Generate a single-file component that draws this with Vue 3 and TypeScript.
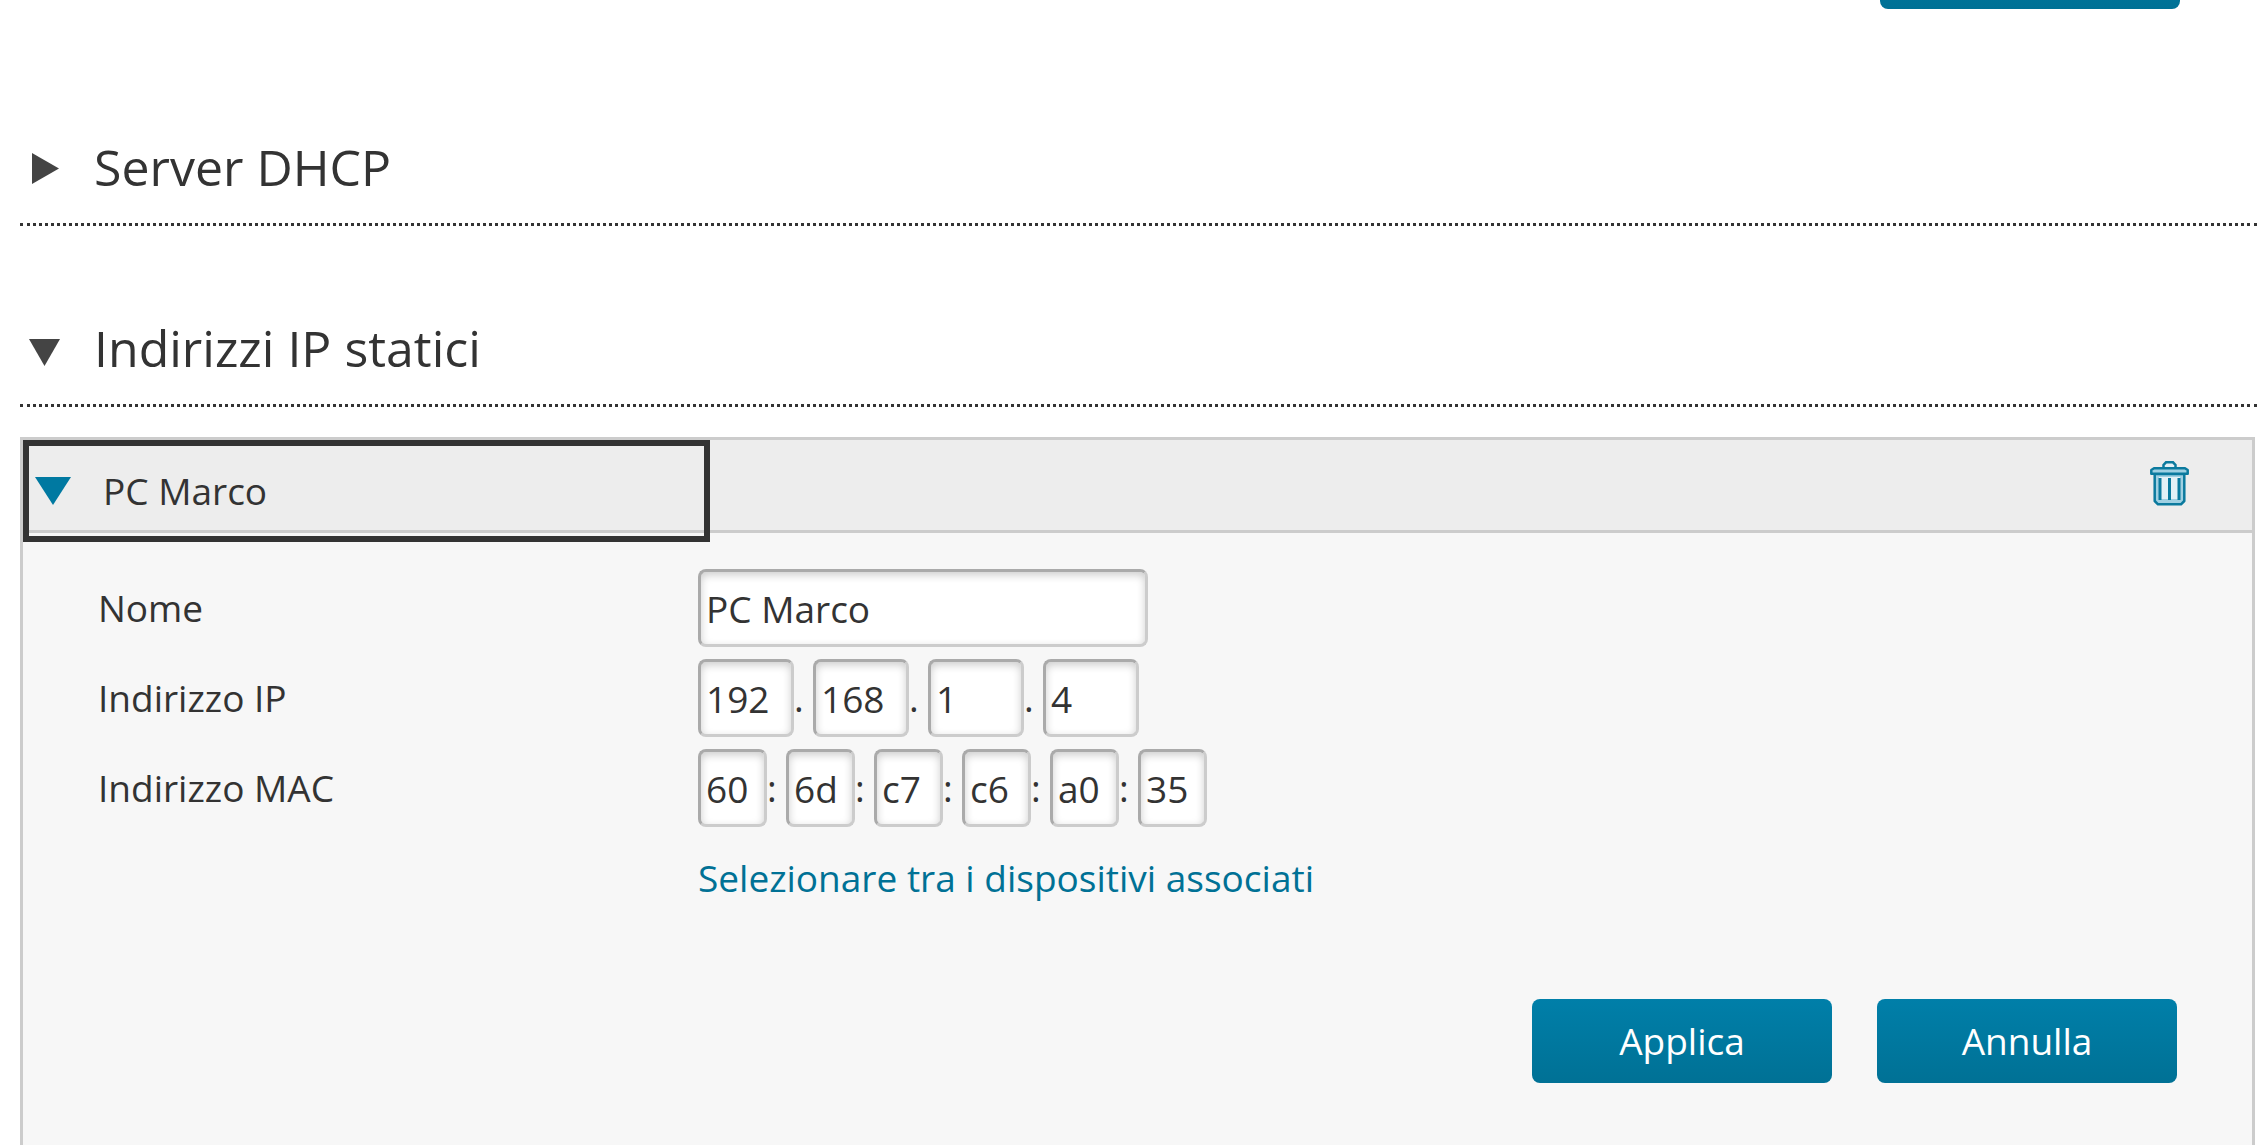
<script setup lang="ts">
import { reactive, ref } from 'vue'

const dhcpOpen = ref(false)
const staticOpen = ref(true)
const entryOpen = ref(true)

const entry = reactive({
  name: 'PC Marco',
  ip: ['192', '168', '1', '4'],
  mac: ['60', '6d', 'c7', 'c6', 'a0', '35'],
})
</script>

<template>
  <main class="page">
    <div class="top-actions">
      <button type="button" class="action" aria-label="Applica"></button>
    </div>

    <h2 class="section">
      <button type="button" class="section-toggle" :aria-expanded="dhcpOpen" @click="dhcpOpen = !dhcpOpen">
        <svg class="arrow" viewBox="0 0 36 36" aria-hidden="true"><path d="M4 4 L31 19.500 L4 35 Z" /></svg>
        <span>Server DHCP</span>
      </button>
    </h2>

    <h2 class="section">
      <button type="button" class="section-toggle" :aria-expanded="staticOpen" @click="staticOpen = !staticOpen">
        <svg class="arrow" viewBox="0 0 36 36" aria-hidden="true"><path d="M1 9 H32 L16.500 36 Z" /></svg>
        <span>Indirizzi IP statici</span>
      </button>
    </h2>

    <section v-if="staticOpen" class="panel">
      <header class="panel-head">
        <button type="button" class="entry-toggle" :aria-expanded="entryOpen" @click="entryOpen = !entryOpen">
          <svg class="entry-arrow" viewBox="0 0 36 28" aria-hidden="true"><path d="M0 0 H36 L18 28 Z" /></svg>
          <span>{{ entry.name }}</span>
        </button>
        <button type="button" class="trash" aria-label="Elimina">
          <svg viewBox="0 0 40 46" aria-hidden="true">
            <path class="shell" d="M4.700 14 H34.300 V41 L31 44.300 H8 L4.700 41 Z" />
            <path class="inner" d="M9 17 H30 V39 H9 Z" />
            <path class="handle" d="M13.500 8 V5 L16 2.300 H23 L25.500 5 V8" />
            <path class="shell" d="M4 8.300 H35 L37.700 10 V13.700 H1.300 V10 Z" />
            <path class="line" d="M10 18 V40 M19.500 18 V40 M29 18 V40" />
          </svg>
        </button>
      </header>

      <form v-if="entryOpen" class="body" @submit.prevent>
        <div class="row">
          <label class="label" for="name">Nome</label>
          <input id="name" v-model="entry.name" class="field name" type="text" />
        </div>
        <div class="row">
          <label class="label" for="ip-0">Indirizzo IP</label>
          <template v-for="(_, i) in entry.ip" :key="i">
            <span v-if="i > 0" class="sep">.</span>
            <input :id="`ip-${i}`" v-model="entry.ip[i]" class="field ip" type="text" maxlength="3" />
          </template>
        </div>
        <div class="row">
          <label class="label" for="mac-0">Indirizzo MAC</label>
          <template v-for="(_, i) in entry.mac" :key="i">
            <span v-if="i > 0" class="sep">:</span>
            <input :id="`mac-${i}`" v-model="entry.mac[i]" class="field mac" type="text" maxlength="2" />
          </template>
        </div>
        <div class="row">
          <span class="label"></span>
          <a class="link" href="#">Selezionare tra i dispositivi associati</a>
        </div>
        <div class="actions">
          <button type="submit" class="action">Applica</button>
          <button type="button" class="action">Annulla</button>
        </div>
      </form>
    </section>
  </main>
</template>

<style>
body {
  margin: 0;
  background: #fff;
}
</style>

<style scoped>
* {
  box-sizing: border-box;
}

.page {
  display: flex;
  flex-direction: column;
  min-height: 100vh;
  padding: 0 2px 0 20px;
  overflow: hidden;
  font-family: 'Open Sans', 'Noto Sans', sans-serif;
  font-size: 37px;
  line-height: 50px;
  color: #333;
}

button,
input {
  font: inherit;
  color: inherit;
}

button {
  padding: 0;
  border: 0;
  background: none;
  cursor: pointer;
}

.top-actions {
  display: flex;
  align-items: flex-end;
  justify-content: flex-end;
  height: 9px;
  padding-right: 75px;
}

.action {
  flex: none;
  width: 300px;
  height: 84px;
  border-radius: 8px;
  background: linear-gradient(#007fa9, #007195);
  color: #fff;
}

.section {
  margin: 0 -2px 0 0;
  padding: 118px 0 16px;
  border-bottom: 3px dotted #333;
  font-size: 50px;
  font-weight: 400;
  line-height: 80px;
}

.section + .section {
  padding-top: 82px;
}

.section-toggle {
  display: flex;
  align-items: center;
  gap: 30px;
  padding-left: 8px;
}

.arrow {
  width: 36px;
  height: 36px;
  fill: #444;
}

.panel {
  flex: 1;
  margin-top: 30px;
  border: 3px solid #ccc;
  border-bottom: 0;
  background: #f7f7f7;
}

.panel-head {
  display: flex;
  align-items: flex-start;
  justify-content: space-between;
  height: 93px;
  border-bottom: 3px solid #ccc;
  background: #ededed;
}

.entry-toggle {
  display: flex;
  align-items: center;
  gap: 32px;
  width: 687px;
  height: 102px;
  padding: 0 6px;
  border: 6px solid #333;
}

.entry-arrow {
  width: 36px;
  height: 28px;
  fill: #0079a1;
}

.trash {
  display: flex;
  padding: 20px 62px 0 0;
}

.trash svg {
  width: 40px;
  height: 46px;
}

.shell {
  fill: #9fd0e2;
  stroke: #0b7a9e;
  stroke-width: 2.500;
  stroke-linejoin: round;
}

.handle {
  fill: #e4f1f6;
  stroke: #0b7a9e;
  stroke-width: 2.500;
}

.inner {
  fill: #e4f1f6;
}

.line {
  fill: none;
  stroke: #0b7a9e;
  stroke-width: 3;
}

.body {
  padding: 36px 75px 56px;
}

.row {
  display: flex;
  align-items: center;
  height: 78px;
  margin-bottom: 12px;
}

.label {
  width: 600px;
}

.field {
  height: 78px;
  padding: 0 5px;
  border: 3px solid;
  border-color: #aaa #ccc #ccc #aaa;
  border-radius: 8px;
  background: #fff;
  box-shadow: inset 0 3px 9px rgba(0, 0, 0, 0.2);
}

.name {
  width: 450px;
}

.ip {
  width: 96px;
}

.mac {
  width: 69px;
}

.sep {
  width: 19px;
}

.link {
  color: #007195;
  text-decoration: none;
}

.actions {
  display: flex;
  justify-content: flex-end;
  gap: 45px;
  padding-top: 70px;
}
</style>
